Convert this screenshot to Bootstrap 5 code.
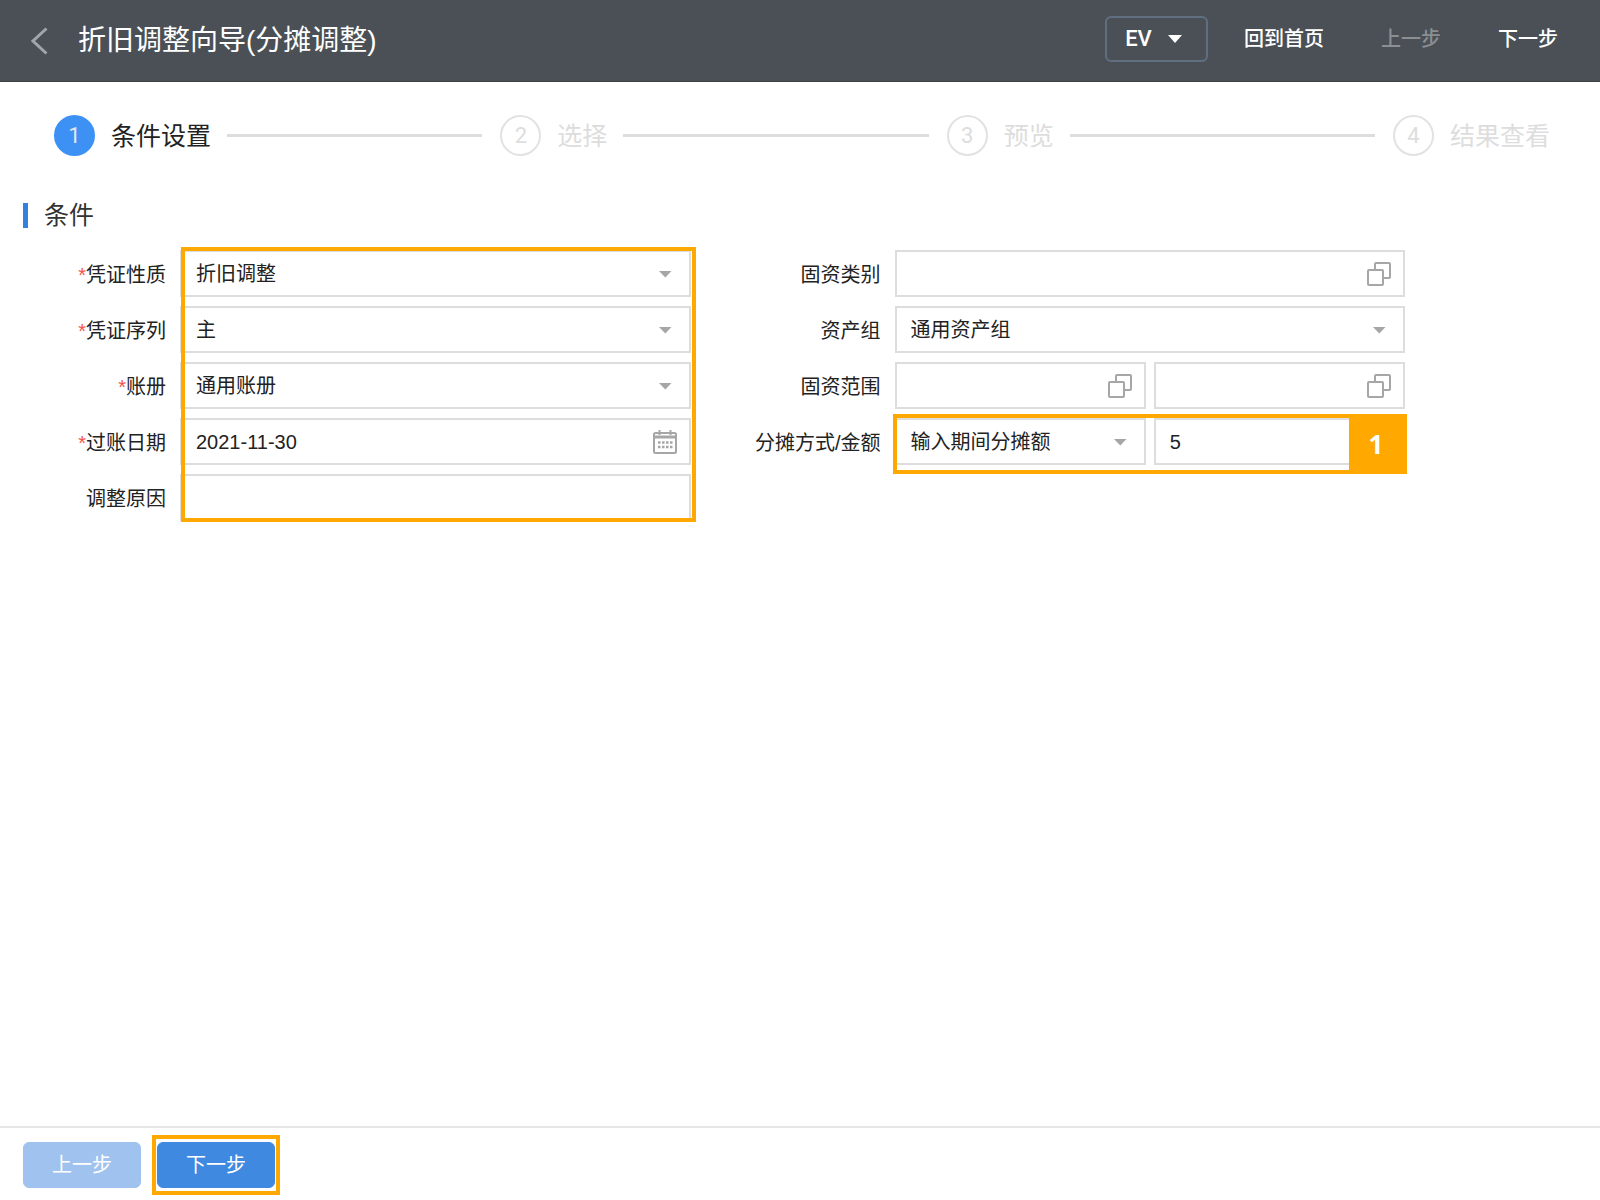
<!DOCTYPE html>
<html lang="zh-CN">
<head>
<meta charset="utf-8">
<meta name="viewport" content="width=device-width, initial-scale=1">
<title>折旧调整向导(分摊调整)</title>
<link rel="stylesheet" href="https://cdn.jsdelivr.net/npm/bootstrap@5.3.0/dist/css/bootstrap.min.css">
<style>
  :root { --line: #ddd; --hint: #ffa900; --brand: #3f8ae0; }
  body { font-family: "Liberation Sans", "Noto Sans CJK SC", sans-serif; font-size: 20px; line-height: 30px; color: #222; background: #fff; }
  button, input, select { font-family: inherit; }

  /* top bar */
  .topbar { background: #4a5056; border-bottom: 1px solid #3a4046; min-height: 82px; padding: 0 42px 4px 31px; }
  .topbar h1 { font-size: 28px; line-height: 40px; padding-top: 4px; }
  .back-link { color: #a3a6a9; margin: 4px 30px 0 0; }
  .topbar .btn { --bs-btn-color: #fff; --bs-btn-hover-color: #fff; --bs-btn-disabled-color: #8b8f93; --bs-btn-disabled-opacity: 1; --bs-btn-disabled-border-color: transparent; font-size: 20px; line-height: 30px; font-weight: 500; padding: 0; }
  .topbar .btn-unit { border: 2px solid #5f6f80; border-radius: 6px; width: 103px; height: 46px; font-family: Roboto, sans-serif; font-size: 22px; padding-right: 6px; }
  .topbar-actions { gap: 57px; margin-left: 36px; }

  /* wizard steps */
  .steps { padding: 32px 50px 0 54px; }
  .step { color: #ddd; font-size: 25px; line-height: 41px; }
  .step-dot { width: 41px; height: 41px; border: 2px solid #e2e2e2; border-radius: 50%; font-family: Roboto, sans-serif; font-size: 22px; margin-right: 16px; }
  .step-name { padding-top: 2px; }
  .step.current { color: #222; }
  .step.current .step-dot { background: #3d91f5; border-color: #3d91f5; color: #e3e6ea; }
  .step-line { height: 3px; background: #ddd; margin: 0 18px 0 16px; }

  /* conditions */
  .section-title { font-size: 25px; line-height: 40px; color: #333; margin: 38px 0 15px 23px; gap: 16px; }
  .section-title::before { content: ""; width: 5px; height: 25px; background: #3480e0; }
  .conditions { padding-right: 195px; }
  .conditions .row { --bs-gutter-x: 24px; }
  .fields { gap: 9px; }
  .field-label { width: 180px; padding: 2px 14px 0 0; text-align: right; flex: none; }
  .required::before { content: "*"; color: #f4514b; font-size: 20px; line-height: 20px; }
  .form-control, .form-select { height: 47px; border: 2px solid var(--line); border-radius: 0; padding: 1px 44px 0 14px; font-size: 20px; line-height: 30px; color: #222; background: #fff none; }
  .field-icon { position: absolute; right: 14px; top: 12px; color: #a6a6a6; pointer-events: none; }

  /* callouts */
  .callout { position: absolute; border: 4px solid var(--hint); pointer-events: none; z-index: 2; }
  .callout-fields { top: -3px; bottom: -1px; left: 181px; right: -5px; }
  .callout-amount { top: -4px; bottom: -9px; left: -2px; right: -2px; }
  .callout-next { inset: -7px -5px; }
  .callout-number { position: absolute; top: 0; bottom: 0; right: 0; width: 54px; background: var(--hint); color: #fff; font: bold 26px "Open Sans", sans-serif; }

  /* footer */
  .actionbar { border-top: 2px solid #e6e6e6; padding: 14px 23px 12px; gap: 16px; }
  .actionbar .btn { --bs-btn-bg: #3f8ae0; --bs-btn-border-color: #3f8ae0; --bs-btn-disabled-bg: #9fc3ee; --bs-btn-disabled-border-color: #9fc3ee; --bs-btn-disabled-opacity: 1; width: 118px; height: 46px; font-size: 20px; line-height: 30px; padding: 0; border-radius: 6px; }
</style>
</head>
<body class="d-flex flex-column min-vh-100">

<svg class="d-none">
  <symbol id="caret" viewBox="0 0 24 24"><path d="M6 9h12.500l-6.200 6.500z" fill="currentColor"/></symbol>
  <symbol id="copy" viewBox="0 0 24 24" fill="none" stroke="currentColor" stroke-width="2"><rect x="1" y="8" width="15" height="15" rx="1"/><path d="M8 8V2q0-1 1-1h13q1 0 1 1v13q0 1-1 1h-6"/></symbol>
  <symbol id="calendar" viewBox="0 0 24 24" fill="none" stroke="currentColor"><rect x="1" y="3" width="22" height="20" rx="1.500" stroke-width="2"/><path d="M2 7h20" stroke-width="3"/><path d="M6.500 0v5M17.500 0v5" stroke-width="2"/><path d="M5 12.500h15M5 17h15" stroke-width="2.500" stroke-dasharray="2.500 1.500"/></symbol>
</svg>

<header class="topbar d-flex align-items-center">
  <a href="#" class="back-link d-flex" aria-label="返回"><svg width="17" height="28" viewBox="0 0 17 28" fill="none" stroke="currentColor" stroke-width="3"><path d="M15.500 1.500 2 14l13.500 12.500"/></svg></a>
  <h1 class="m-0 fw-normal text-white">折旧调整向导(分摊调整)</h1>
  <button type="button" class="btn btn-unit ms-auto d-flex align-items-center justify-content-center gap-3">EV
    <svg width="14" height="8" viewBox="0 0 14 8"><path d="M0 0h14L7 8z" fill="currentColor"/></svg>
  </button>
  <div class="topbar-actions d-flex">
    <button type="button" class="btn border-0">回到首页</button>
    <button type="button" class="btn border-0" disabled>上一步</button>
    <button type="button" class="btn border-0">下一步</button>
  </div>
</header>

<main class="flex-grow-1">
  <ol class="steps list-unstyled d-flex m-0">
    <li class="step current d-flex align-items-center flex-fill w-25"><span class="step-dot d-flex align-items-center justify-content-center flex-shrink-0">1</span><span class="step-name text-nowrap">条件设置</span><span class="step-line flex-fill"></span></li>
    <li class="step d-flex align-items-center flex-fill w-25"><span class="step-dot d-flex align-items-center justify-content-center flex-shrink-0">2</span><span class="step-name text-nowrap">选择</span><span class="step-line flex-fill"></span></li>
    <li class="step d-flex align-items-center flex-fill w-25"><span class="step-dot d-flex align-items-center justify-content-center flex-shrink-0">3</span><span class="step-name text-nowrap">预览</span><span class="step-line flex-fill"></span></li>
    <li class="step d-flex align-items-center flex-shrink-0"><span class="step-dot d-flex align-items-center justify-content-center flex-shrink-0">4</span><span class="step-name text-nowrap">结果查看</span></li>
  </ol>

  <h2 class="section-title d-flex align-items-center fw-normal">条件</h2>

  <form class="conditions">
    <div class="row">
      <div class="col-6">
        <div class="fields d-flex flex-column position-relative">
          <div class="d-flex align-items-center">
            <label class="field-label required" for="nature">凭证性质</label>
            <div class="position-relative flex-fill"><select class="form-select" id="nature"><option>折旧调整</option></select><svg class="field-icon" width="24" height="24"><use href="#caret"/></svg></div>
          </div>
          <div class="d-flex align-items-center">
            <label class="field-label required" for="series">凭证序列</label>
            <div class="position-relative flex-fill"><select class="form-select" id="series"><option>主</option></select><svg class="field-icon" width="24" height="24"><use href="#caret"/></svg></div>
          </div>
          <div class="d-flex align-items-center">
            <label class="field-label required" for="book">账册</label>
            <div class="position-relative flex-fill"><select class="form-select" id="book"><option>通用账册</option></select><svg class="field-icon" width="24" height="24"><use href="#caret"/></svg></div>
          </div>
          <div class="d-flex align-items-center">
            <label class="field-label required" for="posting">过账日期</label>
            <div class="position-relative flex-fill"><input type="text" class="form-control" id="posting" value="2021-11-30"><svg class="field-icon" width="24" height="24"><use href="#calendar"/></svg></div>
          </div>
          <div class="d-flex align-items-center">
            <label class="field-label" for="reason">调整原因</label>
            <div class="position-relative flex-fill"><input type="text" class="form-control" id="reason"></div>
          </div>
          <div class="callout callout-fields"></div>
        </div>
      </div>

      <div class="col-6">
        <div class="fields d-flex flex-column">
          <div class="d-flex align-items-center">
            <label class="field-label" for="category">固资类别</label>
            <div class="position-relative flex-fill"><input type="text" class="form-control" id="category"><svg class="field-icon" width="24" height="24"><use href="#copy"/></svg></div>
          </div>
          <div class="d-flex align-items-center">
            <label class="field-label" for="group">资产组</label>
            <div class="position-relative flex-fill"><select class="form-select" id="group"><option>通用资产组</option></select><svg class="field-icon" width="24" height="24"><use href="#caret"/></svg></div>
          </div>
          <div class="d-flex align-items-center">
            <label class="field-label" for="range-from">固资范围</label>
            <div class="d-flex flex-fill gap-2">
              <div class="position-relative w-50"><input type="text" class="form-control" id="range-from"><svg class="field-icon" width="24" height="24"><use href="#copy"/></svg></div>
              <div class="position-relative w-50"><input type="text" class="form-control" aria-label="固资范围至"><svg class="field-icon" width="24" height="24"><use href="#copy"/></svg></div>
            </div>
          </div>
          <div class="d-flex align-items-center">
            <label class="field-label" for="method">分摊方式/金额</label>
            <div class="d-flex flex-fill gap-2 position-relative">
              <div class="position-relative w-50"><select class="form-select" id="method"><option>输入期间分摊额</option></select><svg class="field-icon" width="24" height="24"><use href="#caret"/></svg></div>
              <div class="w-50"><input type="text" class="form-control" aria-label="金额" value="5"></div>
              <div class="callout callout-amount"><span class="callout-number d-flex align-items-center justify-content-center">1</span></div>
            </div>
          </div>
        </div>
      </div>
    </div>
  </form>
</main>

<footer class="actionbar d-flex">
  <button type="button" class="btn btn-primary" disabled>上一步</button>
  <div class="position-relative">
    <button type="button" class="btn btn-primary">下一步</button>
    <div class="callout callout-next"></div>
  </div>
</footer>

<script src="https://cdn.jsdelivr.net/npm/bootstrap@5.3.0/dist/js/bootstrap.bundle.min.js"></script>
</body>
</html>
